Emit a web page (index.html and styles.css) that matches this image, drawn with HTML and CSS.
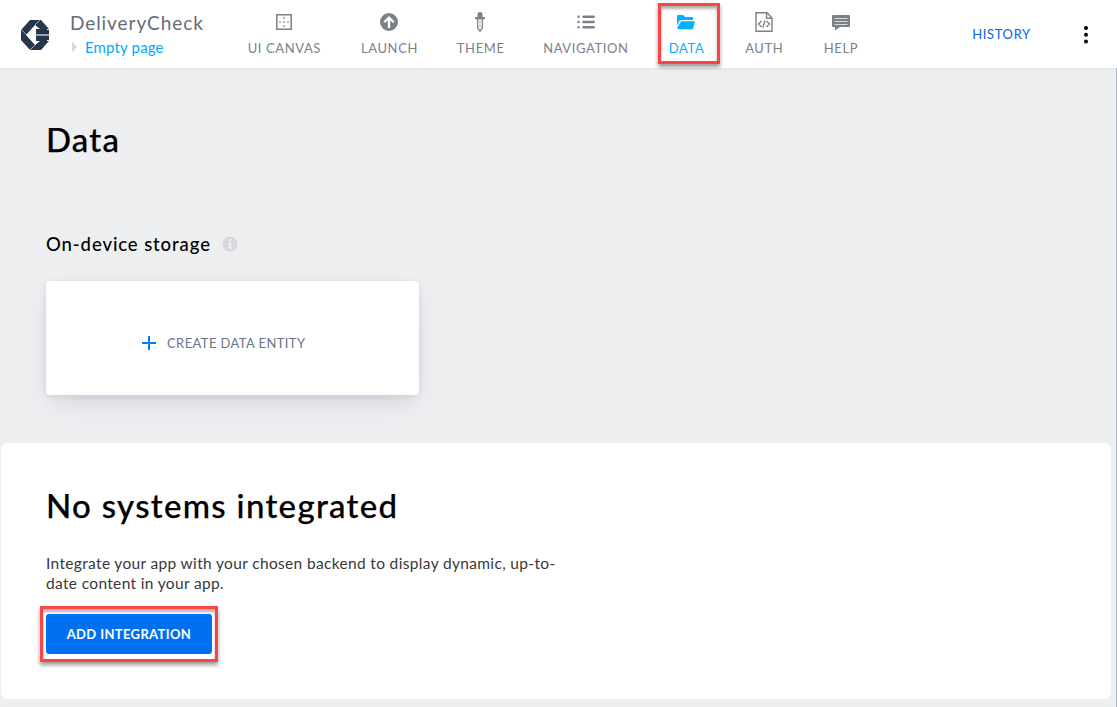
FILE: index.html
```html
<!DOCTYPE html>
<html lang="en">
<head>
<meta charset="utf-8">
<title>DeliveryCheck</title>
<link rel="stylesheet" href="styles.css">
</head>
<body>
<header class="topbar">
  <svg class="logo" width="28" height="30" viewBox="0 0 28 30">
    <path fill="#26374c" d="M9 0H20L28 9V21L20 30H9L0 20V10Z"/>
    <path fill="#fff" d="M14 5L19 9H15V21H19L14 25L5 15Z"/>
    <path fill="none" stroke="#fff" stroke-width=".6" d="M0 9.5L6 15M14 5L19 0M14 25L9 30M14 25L18 21"/>
    <path fill="#9ba3ad" d="M15 14H28V16H15Z"/>
    <path fill="#fff" d="M26 9H28V10H26ZM26 20H28V21H26Z"/>
  </svg>
  <div class="project">
    <div class="project-name">DeliveryCheck</div>
    <div class="page-name"><span class="caret"></span><span>Empty page</span></div>
  </div>
  <nav class="nav">
    <a class="item"><svg class="icon" width="20" height="20" viewBox="0 0 20 20"><path fill="none" stroke="currentColor" stroke-width="1.5" d="M2.8 2.8H17.2V17.2H2.8Z"/><path fill="currentColor" d="M9.2 5.3h1.6v1.4H9.2zM9.2 9.3h1.6v1.4H9.2zM9.2 13.3h1.6v1.4H9.2zM5.3 9.3h1.4v1.4H5.3zM13.3 9.3h1.4v1.4h-1.4z"/></svg><span>UI CANVAS</span></a>
    <a class="item"><svg class="icon" width="20" height="20" viewBox="0 0 20 20"><circle cx="10" cy="10" r="9" fill="currentColor"/><path fill="none" stroke="#fff" stroke-width="2.3" d="M10 16V6M5.3 10.3L10 5.6L14.7 10.3"/></svg><span>LAUNCH</span></a>
    <a class="item"><svg class="icon" width="20" height="20" viewBox="0 0 20 20"><path fill="currentColor" d="M7.5 5V2Q7.5 0 10 0T12.5 2V5H15V7.2H5V5Z"/><path fill="none" stroke="currentColor" stroke-width="1.3" d="M7.6 7V16L10 19.2L12.4 16V7"/><path stroke="currentColor" stroke-width=".6" d="M10 7V16"/></svg><span>THEME</span></a>
    <a class="item"><svg class="icon" width="20" height="20" viewBox="0 0 20 20"><path stroke="currentColor" stroke-width="2.4" stroke-linecap="round" d="M7.5 4.7H17.7M7.5 10H17.7M7.5 15.3H17.7M2.5 4.7h.1M2.5 10h.1M2.5 15.3h.1"/></svg><span>NAVIGATION</span></a>
    <a class="item active"><svg class="icon" width="20" height="20" viewBox="0 0 20 20"><path fill="currentColor" d="M1 4Q1 3 2 3H7L9 5H16Q17 5 17 6V8H5Q3.8 8 3.4 9L1 14ZM5.2 9.2H19L17.3 16Q17 17.2 16 17.2H2.3L1 16Z"/></svg><span>DATA</span></a>
    <a class="item"><svg class="icon" width="20" height="20" viewBox="0 0 20 20"><path fill="none" stroke="currentColor" stroke-width="1.4" d="M2 .8H13L18 6V19.2H2ZM12.5 1V6.3H18M7.5 9L4.5 12L7.5 15M12.5 9L15.5 12L12.5 15M11 8.5L9 15.5"/></svg><span>AUTH</span></a>
    <a class="item"><svg class="icon" width="20" height="20" viewBox="0 0 20 20"><path fill="currentColor" d="M2 3H18Q19 3 19 4V14Q19 15 18 15H9L4 18.5V15H2Q1 15 1 14V4Q1 3 2 3Z"/><path stroke="#fff" stroke-width=".9" stroke-opacity=".8" d="M3.5 6.5H16.5M3.5 9.5H16.5M3.5 12.5H16.5"/></svg><span>HELP</span></a>
    <span class="mark mark-data"></span>
  </nav>
  <a class="history">HISTORY</a>
  <svg class="more" width="6" height="20" viewBox="0 0 6 20"><circle cx="3" cy="3" r="2"/><circle cx="3" cy="9.7" r="2"/><circle cx="3" cy="16.4" r="2"/></svg>
</header>
<main class="content">
  <h1 class="title">Data</h1>
  <h2 class="subtitle"><span class="subtitle-text">On-device storage</span>
    <svg class="info" width="16" height="16" viewBox="0 0 16 16"><circle cx="8" cy="8" r="7.5" fill="#d8d9dc"/><path fill="#eeeff1" d="M7 3h2.2v2H7zM6 6.3h3.2v5h1v1.2H6v-1.2h1V7.5H6z"/></svg>
  </h2>
  <button class="create">
    <svg width="14" height="14" viewBox="0 0 14 14"><path stroke="#0080f0" stroke-width="2" d="M7 0V14M0 7H14"/></svg>
    <span class="create-text">CREATE DATA ENTITY</span>
  </button>
  <section class="panel">
    <h1 class="panel-title">No systems integrated</h1>
    <p class="desc"><span class="line-a">Integrate your app with your chosen backend to display dynamic, up-to-</span><br><span class="line-b">date content in your app.</span></p>
    <div class="action"><button class="add">ADD INTEGRATION</button><span class="mark mark-add"></span></div>
  </section>
</main>
</body>
</html>
```
FILE: styles.css
```css
* { box-sizing: border-box; }
body { margin: 0; height: 707px; overflow: hidden; background: #eeeff1; color: #000; font-family: Lato, sans-serif; }
h1, h2, p { margin: 0; font-weight: 500; }
button { border: 0; font-family: inherit; }
.topbar { position: relative; z-index: 1; display: flex; align-items: flex-start; height: 68px; background: #fff; box-shadow: 0 0 4px rgba(0,0,0,.08); }
.logo { margin: 20px 0 0 21px; }
.project { width: 177px; margin-left: 21px; padding-top: 11px; white-space: nowrap; }
.project-name { font-size: 19px; line-height: 23px; letter-spacing: .93px; color: #666b77; }
.page-name { display: flex; align-items: center; height: 25px; margin-left: 2px; font-size: 15px; letter-spacing: .15px; color: #00aaff; }
.caret { margin-right: 8px; border: 5px solid transparent; border-left-color: #d6d8dc; border-right: 0; }
.nav { position: relative; display: grid; grid-template-columns: 74px 57px 46px 85px 37px 39px 35px; column-gap: 39.7px; padding-top: 12px; }
.item { display: flex; flex-direction: column; align-items: center; color: #7d8088; font-size: 13px; line-height: 20px; letter-spacing: .6px; white-space: nowrap; }
.item span { margin: 6px -.6px 0 0; }
.active { color: #00b2ff; }
.history { width: 59px; margin: 25px 0 0 114px; font-size: 13px; letter-spacing: .65px; line-height: 18px; color: #0865dc; }
.more { margin: 25px 0 0 52px; }
.mark { position: absolute; border: 3px solid #fc4346; box-shadow: 0 3px 4px rgba(0,0,0,.4), inset 0 3px 3px rgba(0,0,0,.3); pointer-events: none; }
.mark-data { left: 411px; top: 3px; width: 62px; height: 61px; }
.content { height: 639px; border-right: 1px solid #b0b6c3; padding: 49px 5px 0 1px; }
.title { margin-left: 45px; font-size: 33px; line-height: 44px; letter-spacing: 1.2px; -webkit-text-stroke: .25px; }
.subtitle { display: flex; align-items: center; height: 30px; margin: 68px 0 0 45px; font-size: 18.5px; letter-spacing: .9px; gap: 12px; }
.info { margin-left: -1px; }
.create { display: flex; align-items: center; width: 373px; height: 114px; margin: 22px 0 0 45px; padding: 10px 0 0 96px; gap: 11px; background: #fff; border-radius: 4px; box-shadow: 0 12px 24px -6px rgba(60,75,110,.17), 0 1px 6px rgba(60,75,110,.12); font-size: 13px; letter-spacing: .4px; color: #69758a; }
.panel { height: 256px; margin-top: 48px; padding: 39px 0 0 45px; background: #fff; border-radius: 7px; }
.panel-title { font-size: 33px; line-height: 46px; letter-spacing: 1.3px; -webkit-text-stroke: .25px; }
.desc { margin-top: 25px; font-size: 15.5px; line-height: 20px; letter-spacing: .34px; font-weight: 400; color: #38383b; }
.action { position: relative; margin-top: 21px; width: 166px; height: 40px; }
.add { width: 166px; height: 40px; padding: 0 0 1px; border-radius: 3px; background: #0070f3; color: #fff; font-size: 13px; letter-spacing: .37px; font-weight: 700; white-space: nowrap; }
.mark-add { left: -6px; top: -8px; width: 178px; height: 56px; }
```
